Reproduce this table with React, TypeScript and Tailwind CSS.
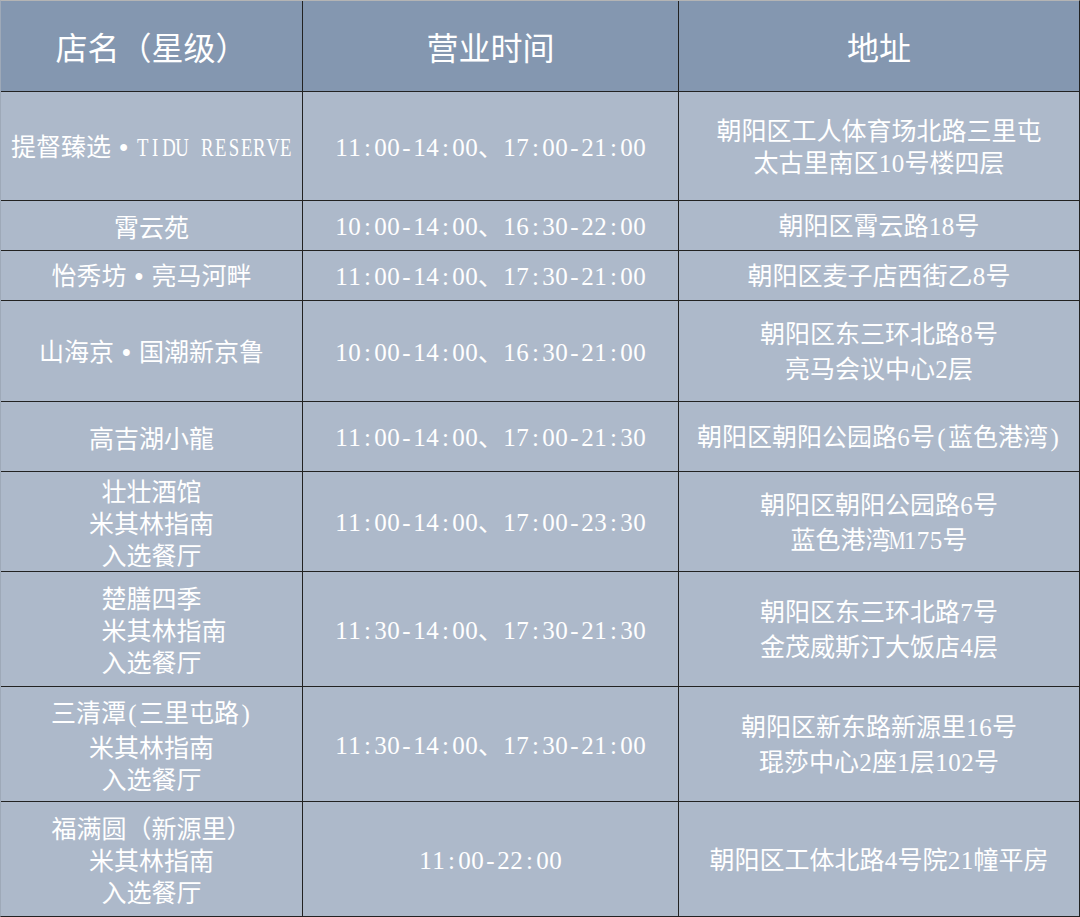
import * as React from "react";

type Row = { name: string[]; hours: string; addr: string[] };

const ROWS: Row[] = [
  { name: ["提督臻选•TIDU RESERVE"], hours: "11:00-14:00、17:00-21:00", addr: ["朝阳区工人体育场北路三里屯", "太古里南区10号楼四层"] },
  { name: ["霄云苑"], hours: "10:00-14:00、16:30-22:00", addr: ["朝阳区霄云路18号"] },
  { name: ["怡秀坊•亮马河畔"], hours: "11:00-14:00、17:30-21:00", addr: ["朝阳区麦子店西街乙8号"] },
  { name: ["山海京•国潮新京鲁"], hours: "10:00-14:00、16:30-21:00", addr: ["朝阳区东三环北路8号", "亮马会议中心2层"] },
  { name: ["高吉湖小龍"], hours: "11:00-14:00、17:00-21:30", addr: ["朝阳区朝阳公园路6号(蓝色港湾)"] },
  { name: ["壮壮酒馆", "米其林指南", "入选餐厅"], hours: "11:00-14:00、17:00-23:30", addr: ["朝阳区朝阳公园路6号", "蓝色港湾M175号"] },
  { name: ["楚膳四季", "\u3000米其林指南", "入选餐厅"], hours: "11:30-14:00、17:30-21:30", addr: ["朝阳区东三环北路7号", "金茂威斯汀大饭店4层"] },
  { name: ["三清潭(三里屯路)", "米其林指南", "入选餐厅"], hours: "11:30-14:00、17:30-21:00", addr: ["朝阳区新东路新源里16号", "琨莎中心2座1层102号"] },
  { name: ["福满圆（新源里）", "米其林指南", "入选餐厅"], hours: "11:00-22:00", addr: ["朝阳区工体北路4号院21幢平房"] },
];

// SimSun-style text: half-width latin cells, full-width CJK
function Txt({ text }: { text: string }) {
  return (
    <>
      {Array.from(text).map((ch, i) => {
        if (ch === "•") {
          return (
            <span key={i} className="inline-block w-[25px] text-center font-['Liberation_Serif',serif] font-bold">
              •
            </span>
          );
        }
        if (ch === " ") {
          return <span key={i} className="inline-block w-[13px]" />;
        }
        if (/[A-Z]/.test(ch)) {
          return (
            <span key={i} className="inline-flex w-[13px] justify-center font-['Liberation_Serif',serif]">
              <span className="inline-block scale-x-75">{ch}</span>
            </span>
          );
        }
        if (ch.charCodeAt(0) < 128) {
          return (
            <span key={i} className="inline-block w-[13px] text-center font-['Liberation_Serif',serif]">
              {ch}
            </span>
          );
        }
        return <span key={i}>{ch}</span>;
      })}
    </>
  );
}

function Cell({ lines }: { lines: string[] }) {
  return (
    <div className="bg-[#adb9ca] flex flex-col items-center justify-center text-white text-[25px] leading-[32px] whitespace-nowrap">
      {lines.map((l, i) =>
        l.startsWith("\u3000") ? (
          <div key={i} className="pl-[25px]">
            <Txt text={l.slice(1)} />
          </div>
        ) : (
          <div key={i}>
            <Txt text={l} />
          </div>
        )
      )}
    </div>
  );
}

export default function App() {
  const head = ["店名（星级）", "营业时间", "地址"];
  return (
    <div className="w-[1080px] h-[917px] bg-[#222] border-t border-t-[#b4b4b4] border-l border-l-[#9ea9b8] border-r border-b border-[#222] font-['Noto_Sans_CJK_SC',sans-serif]">
      <div className="grid grid-cols-[301px_375px_400px] grid-rows-[90px_108px_49px_49px_100px_69px_99px_114px_114px_114px] gap-px">
        {head.map((h) => (
          <div
            key={h}
            className="bg-[#8497b0] flex items-center justify-center text-white text-[32px] font-normal"
          >
            {h}
          </div>
        ))}
        {ROWS.map((r, i) => (
          <React.Fragment key={i}>
            <Cell lines={r.name} />
            <Cell lines={[r.hours]} />
            <Cell lines={r.addr} />
          </React.Fragment>
        ))}
      </div>
    </div>
  );
}
